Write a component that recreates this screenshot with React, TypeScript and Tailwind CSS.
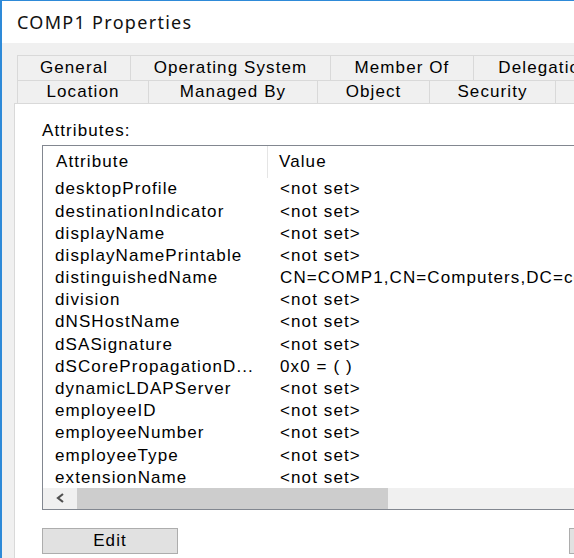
import React from 'react';

const rows: [string, string][] = [
  ['desktopProfile', '<not set>'],
  ['destinationIndicator', '<not set>'],
  ['displayName', '<not set>'],
  ['displayNamePrintable', '<not set>'],
  ['distinguishedName', 'CN=COMP1,CN=Computers,DC=contoso,DC=com'],
  ['division', '<not set>'],
  ['dNSHostName', '<not set>'],
  ['dSASignature', '<not set>'],
  ['dSCorePropagationD...', '0x0 = ( )'],
  ['dynamicLDAPServer', '<not set>'],
  ['employeeID', '<not set>'],
  ['employeeNumber', '<not set>'],
  ['employeeType', '<not set>'],
  ['extensionName', '<not set>'],
];

const topTabs = [
  { label: 'General', w: 'w-[113px]' },
  { label: 'Operating System', w: 'w-[200px]' },
  { label: 'Member Of', w: 'w-[143px]' },
  { label: 'Delegation', w: 'w-[142px]' },
];

const bottomTabs = [
  { label: 'Location', w: 'w-[131px]' },
  { label: 'Managed By', w: 'w-[169px]' },
  { label: 'Object', w: 'w-[112px]' },
  { label: 'Security', w: 'w-[126px]' },
  { label: '', w: 'w-[130px]' },
];

const App: React.FC = () => {
  return (
    <div className="w-[574px] h-[558px] overflow-hidden flex flex-col border-l-2 border-t border-[#2e8ad8] bg-[#f0f0f0] text-black font-['Liberation_Sans',Arial,sans-serif] text-[17px] tracking-[1.1px]">
      {/* title bar */}
      <div className="h-[42px] shrink-0 bg-white flex items-center pl-[15px] font-['Noto_Sans',sans-serif] text-[18px] tracking-[1.3px] text-[#111]">
        COMP1 Properties
      </div>

      <div className="flex-1 pt-[12px] pl-[12px]">
        {/* tab headers */}
        <div className="ml-[3px] w-[760px]">
          <div className="flex h-[25px] border-l border-t border-[#d9d9d9]">
            {topTabs.map((t) => (
              <div key={t.label} className={`${t.w} shrink-0 border-r border-[#d9d9d9] flex items-center justify-center`}>
                {t.label}
              </div>
            ))}
          </div>
          <div className="flex h-[23px] border-l border-t border-[#d9d9d9]">
            {bottomTabs.map((t, i) => (
              <div key={i} className={`${t.w} shrink-0 border-r border-[#d9d9d9] flex items-center justify-center`}>
                {t.label}
              </div>
            ))}
          </div>
        </div>

        {/* tab page */}
        <div className="w-[760px] h-[480px] bg-white border border-[#d9d9d9] pl-[27px] pt-[17px]">
          <div className="h-[20px] leading-[20px]">Attributes:</div>

          <div className="mt-[4px] w-[700px] border border-[#828790] flex flex-col">
            <div className="h-[32px] flex items-center">
              <div className="w-[225px] pl-[13px] h-full flex items-center border-r border-[#e5e5e5]">Attribute</div>
              <div className="pl-[11px]">Value</div>
            </div>
            {rows.map(([name, value]) => (
              <div key={name} className="h-[22.2px] flex items-center whitespace-nowrap">
                <div className="w-[225px] pl-[12px] shrink-0">{name}</div>
                <div className="pl-[12px]">{value}</div>
              </div>
            ))}
            {/* horizontal scrollbar */}
            <div className="h-[21px] -mt-[1px] bg-[#f0f0f0] flex items-center">
              <div className="w-[34px] h-full flex items-center justify-center">
                <svg width="9" height="10" viewBox="0 0 9 10">
                  <polyline points="7,1 2,5 7,9" fill="none" stroke="#505050" strokeWidth="2.2" />
                </svg>
              </div>
              <div className="w-[311px] h-full bg-[#cdcdcd]" />
            </div>
          </div>

          <div className="mt-[18px] flex gap-[391px]">
            <button className="w-[136px] h-[26px] bg-[#e1e1e1] border border-[#adadad] flex items-center justify-center">
              Edit
            </button>
            <button className="w-[136px] h-[26px] bg-[#e1e1e1] border border-[#adadad]" />
          </div>
        </div>
      </div>
    </div>
  );
};

export default App;
